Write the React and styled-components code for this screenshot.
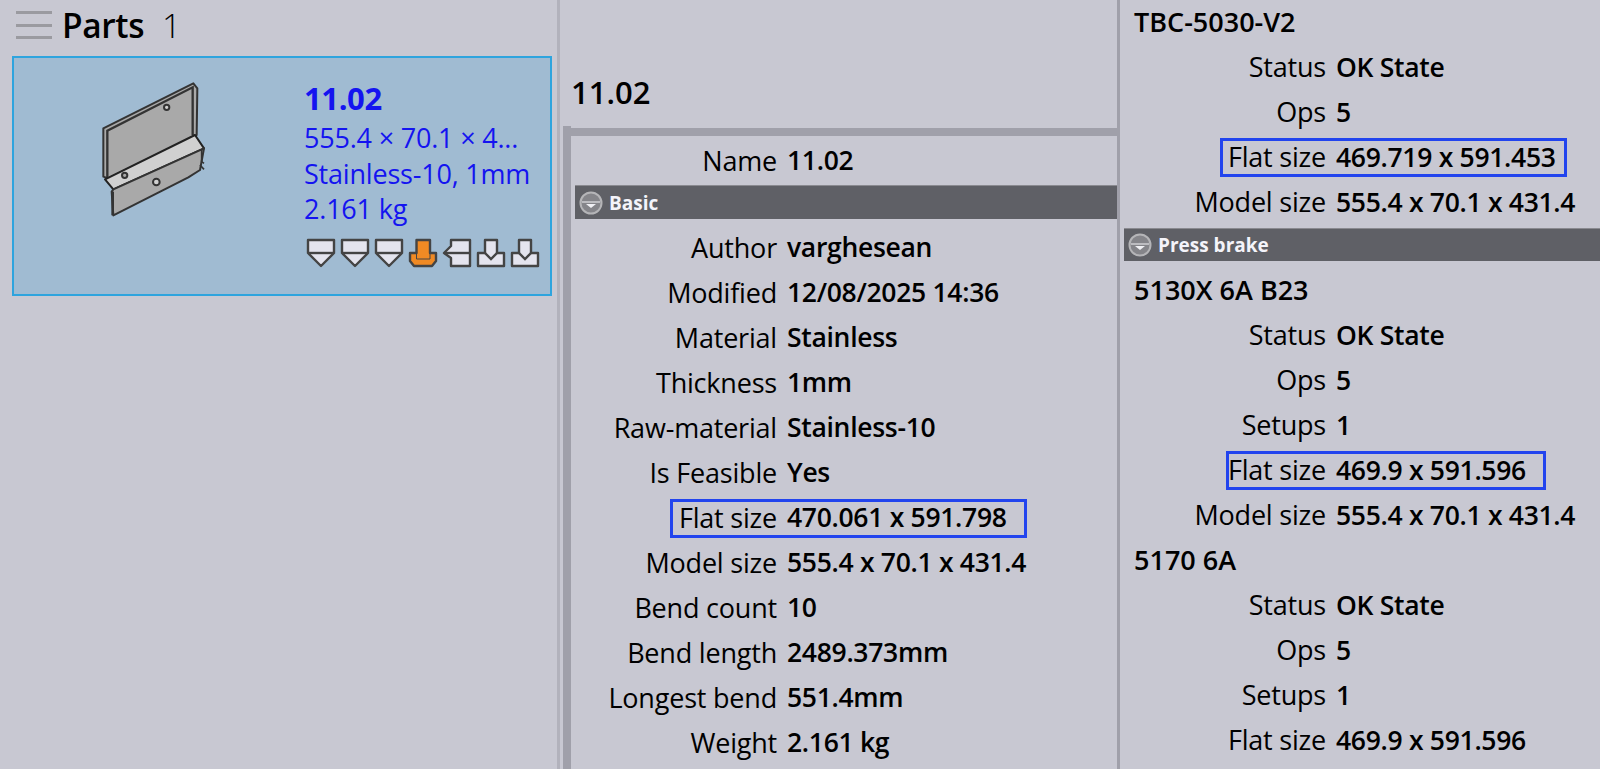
import React from 'react';
import styled, { createGlobalStyle } from 'styled-components';

const GlobalStyle = createGlobalStyle`
  html, body { margin: 0; padding: 0; height: 100%; overflow: hidden; }
  body { background: #c8c8d2; font-family: 'Open Sans', 'Noto Sans', sans-serif; color: #000; }
  * { box-sizing: border-box; }
`;

const basicRows = [
  ['Author', 'varghesean'],
  ['Modified', '12/08/2025 14:36'],
  ['Material', 'Stainless'],
  ['Thickness', '1mm'],
  ['Raw-material', 'Stainless-10'],
  ['Is Feasible', 'Yes'],
  ['Flat size', '470.061 x 591.798', { left: 99, width: 357 }],
  ['Model size', '555.4 x 70.1 x 431.4'],
  ['Bend count', '10'],
  ['Bend length', '2489.373mm'],
  ['Longest bend', '551.4mm'],
  ['Weight', '2.161 kg'],
];

const Icon = ({ kind }) => {
  if (kind === 'down')
    return (
      <BendIcon viewBox="0 0 30 30">
        <path d="M2 2H28V15L15 28L2 15Z" fill="#e4e4ee" stroke="#444" strokeWidth="2.4" strokeLinejoin="round" />
        <path d="M2 15H28" stroke="#444" strokeWidth="2.4" />
      </BendIcon>
    );
  if (kind === 'active')
    return (
      <BendIcon viewBox="0 0 30 30">
        <path d="M8.5 2H22V15H28V23L24 28H6L2 23V15H8.5Z" fill="#f08a24" stroke="#444" strokeWidth="2.4" strokeLinejoin="round" />
        <path d="M8.5 15V21H22V15" fill="none" stroke="#444" strokeWidth="1" />
      </BendIcon>
    );
  if (kind === 'left')
    return (
      <BendIcon viewBox="0 0 30 30">
        <path d="M9 2H28V28H9V20L2 15L9 8Z" fill="#e4e4ee" stroke="#444" strokeWidth="2.4" strokeLinejoin="round" />
        <path d="M2 15H28" stroke="#444" strokeWidth="2.4" />
      </BendIcon>
    );
  return (
    <BendIcon viewBox="0 0 30 30">
      <path d="M9 2H21V15H28V28H2V15H9Z" fill="#e4e4ee" stroke="#444" strokeWidth="2.4" strokeLinejoin="round" />
      <path d="M9 15L15 21L21 15" fill="none" stroke="#444" strokeWidth="2.4" />
    </BendIcon>
  );
};

const PartDrawing = () => (
  <Thumb viewBox="0 0 510 480">
    <path d="M130 175L400 40L412 55L410 195L145 325L130 320Z" fill="#a9a9a9" stroke="#333" strokeWidth="6" strokeLinejoin="round" />
    <path d="M142 325V182L398 52V195" fill="none" stroke="#333" strokeWidth="7" />
    <path d="M135 328L405 195L432 235L160 358Z" fill="#d0d0d0" stroke="#222" strokeWidth="6" strokeLinejoin="round" />
    <path d="M160 358L432 235L420 300L385 322L160 436L155 365Z" fill="#a9a9a9" stroke="#333" strokeWidth="6" strokeLinejoin="round" />
    <circle cx="320" cy="112" r="8" fill="#d0d0d0" stroke="#333" strokeWidth="6" />
    <circle cx="194" cy="316" r="8" fill="#a9a9a9" stroke="#333" strokeWidth="6" />
    <circle cx="289" cy="336" r="10" fill="#d0d0d0" stroke="#333" strokeWidth="6" />
    <path d="M425 240V275L432 280M420 285L432 298" fill="none" stroke="#333" strokeWidth="5" />
    <path d="M158 365V436" fill="none" stroke="#333" strokeWidth="8" />
  </Thumb>
);

const CollapseIcon = () => (
  <svg width="24" height="24" viewBox="0 0 24 24">
    <circle cx="12" cy="12" r="10.5" fill="#85858a" stroke="#b5b5b8" strokeWidth="2" />
    <path d="M3 11H21" stroke="#cfcfd2" strokeWidth="1.5" />
    <path d="M7 13H17L12 17Z" fill="#f0f0f4" />
  </svg>
);

const PropRow = ({ label, value, box }) => (
  <Row>
    <Label>{label}</Label>
    <Value>{value}</Value>
    {box && <Highlight $left={box.left} $width={box.width} />}
  </Row>
);

export default function App() {
  return (
    <Page>
      <GlobalStyle />
      <LeftPane>
        <TitleBar>
          <Burger>
            <span />
            <span />
            <span />
          </Burger>
          <Title>Parts</Title>
          <Count>1</Count>
        </TitleBar>
        <Card>
          <PartDrawing />
          <CardInfo>
            <CardName>11.02</CardName>
            <CardLine>555.4 × 70.1 × 4...</CardLine>
            <CardLine>Stainless-10, 1mm</CardLine>
            <CardLine>2.161 kg</CardLine>
            <IconRow>
              {['down', 'down', 'down', 'active', 'left', 'in', 'in'].map((kind, i) => (
                <Icon key={i} kind={kind} />
              ))}
            </IconRow>
          </CardInfo>
        </Card>
      </LeftPane>
      <Splitter $light />
      <MiddlePane>
        <PartHeading>11.02</PartHeading>
        <Panel>
          <PropRow label="Name" value="11.02" />
          <SectionBar>
            <CollapseIcon />
            Basic
          </SectionBar>
          {basicRows.map(([label, value, box]) => (
            <PropRow key={label} label={label} value={value} box={box} />
          ))}
        </Panel>
      </MiddlePane>
      <Splitter />
      <RightPane>
        <MachineName>TBC-5030-V2</MachineName>
        <PropRow label="Status" value="OK State" />
        <PropRow label="Ops" value="5" />
        <PropRow label="Flat size" value="469.719 x 591.453" box={{ left: 100, width: 347 }} />
        <PropRow label="Model size" value="555.4 x 70.1 x 431.4" />
        <SectionBar $right>
          <CollapseIcon />
          Press brake
        </SectionBar>
        <MachineName>5130X 6A B23</MachineName>
        <PropRow label="Status" value="OK State" />
        <PropRow label="Ops" value="5" />
        <PropRow label="Setups" value="1" />
        <PropRow label="Flat size" value="469.9 x 591.596" box={{ left: 106, width: 320 }} />
        <PropRow label="Model size" value="555.4 x 70.1 x 431.4" />
        <MachineName>5170 6A</MachineName>
        <PropRow label="Status" value="OK State" />
        <PropRow label="Ops" value="5" />
        <PropRow label="Setups" value="1" />
        <PropRow label="Flat size" value="469.9 x 591.596" />
      </RightPane>
    </Page>
  );
}

const Page = styled.div`
  display: flex;
  width: 1600px;
  height: 769px;
  overflow: hidden;
  background: #c8c8d2;
  font-size: 27px;
`;

const LeftPane = styled.div`
  width: 557px;
  flex: none;
  padding-left: 12px;
`;

const TitleBar = styled.div`
  display: flex;
  align-items: center;
  height: 56px;
  padding-left: 4px;
  padding-bottom: 6px;
`;

const Burger = styled.div`
  display: flex;
  flex-direction: column;
  gap: 9.5px;
  width: 36px;
  margin-right: 10px;

  span {
    display: block;
    height: 3px;
    background: #9a9aa0;
  }
`;

const Title = styled.div`
  font-size: 33.5px;
  font-weight: 600;
  letter-spacing: -0.4px;
`;

const Count = styled.div`
  font-size: 33.5px;
  font-weight: 300;
  margin-left: 18px;
`;

const Card = styled.div`
  display: flex;
  width: 540px;
  height: 240px;
  background: #a0bbd2;
  border: 2px solid #2ea4de;
`;

const Thumb = styled.svg`
  width: 170px;
  height: 160px;
  margin: 12px 0 0 46px;
  flex: none;
  filter: blur(0.4px);
`;

const CardInfo = styled.div`
  margin-left: 74px;
  padding-top: 18px;
  color: #1414f0;
  white-space: nowrap;
  letter-spacing: -0.2px;
`;

const CardName = styled.div`
  font-size: 31px;
  font-weight: 700;
  line-height: 44px;
  letter-spacing: -0.4px;
`;

const CardLine = styled.div`
  line-height: 35.5px;
  height: 35.5px;
`;

const IconRow = styled.div`
  display: flex;
  gap: 4px;
  margin-top: 11px;
  margin-left: 2px;
`;

const BendIcon = styled.svg`
  width: 30px;
  height: 30px;
  flex: none;
`;

const Splitter = styled.div`
  flex: none;
  width: 3px;
  height: 100%;
  background: ${(p) => (p.$light ? '#b2b2bc' : '#a0a0aa')};
`;

const MiddlePane = styled.div`
  width: 557px;
  flex: none;
  padding-left: 3px;
`;

const PartHeading = styled.div`
  height: 128px;
  padding-left: 8px;
  font-size: 31px;
  font-weight: 600;
  line-height: 184px;
`;

const Panel = styled.div`
  position: relative;
  height: 641px;
  border-top: 8px solid #a0a0aa;
  border-left: 8px solid #a0a0aa;
  padding-top: 3px;

  &::before {
    content: '';
    position: absolute;
    top: -10px;
    left: -8px;
    width: 8px;
    height: 2px;
    background: #a0a0aa;
  }
`;

const Row = styled.div`
  position: relative;
  display: flex;
  align-items: center;
  height: 45px;
  gap: 10px;
  white-space: nowrap;
  padding-bottom: 3px;
`;

const Label = styled.div`
  flex: none;
  width: 206px;
  text-align: right;
  letter-spacing: -0.2px;
`;

const Value = styled.div`
  font-size: 26.5px;
  font-weight: 600;
  letter-spacing: -0.3px;
`;

const Highlight = styled.div`
  position: absolute;
  top: 3px;
  left: ${(p) => p.$left}px;
  width: ${(p) => p.$width}px;
  height: 39px;
  border: 3px solid #2244ee;
  pointer-events: none;
`;

const SectionBar = styled.div`
  display: flex;
  align-items: center;
  gap: 6px;
  height: ${(p) => (p.$right ? '33px' : '34px')};
  margin: ${(p) => (p.$right ? '3px 0 7px 4px' : '1px 0 7px 4px')};
  padding-left: 4px;
  background: #5f6066;
  border-top: 1px solid #8a8a90;
  color: #f4f4fa;
  font-size: 19px;
  font-weight: 700;
`;

const RightPane = styled.div`
  flex: 1;
  min-width: 0;

  ${Row} {
    padding-bottom: 1.5px;
  }
`;

const MachineName = styled.div`
  display: flex;
  align-items: center;
  height: 45px;
  padding: 0 0 3px 14px;
  font-weight: 600;
`;
